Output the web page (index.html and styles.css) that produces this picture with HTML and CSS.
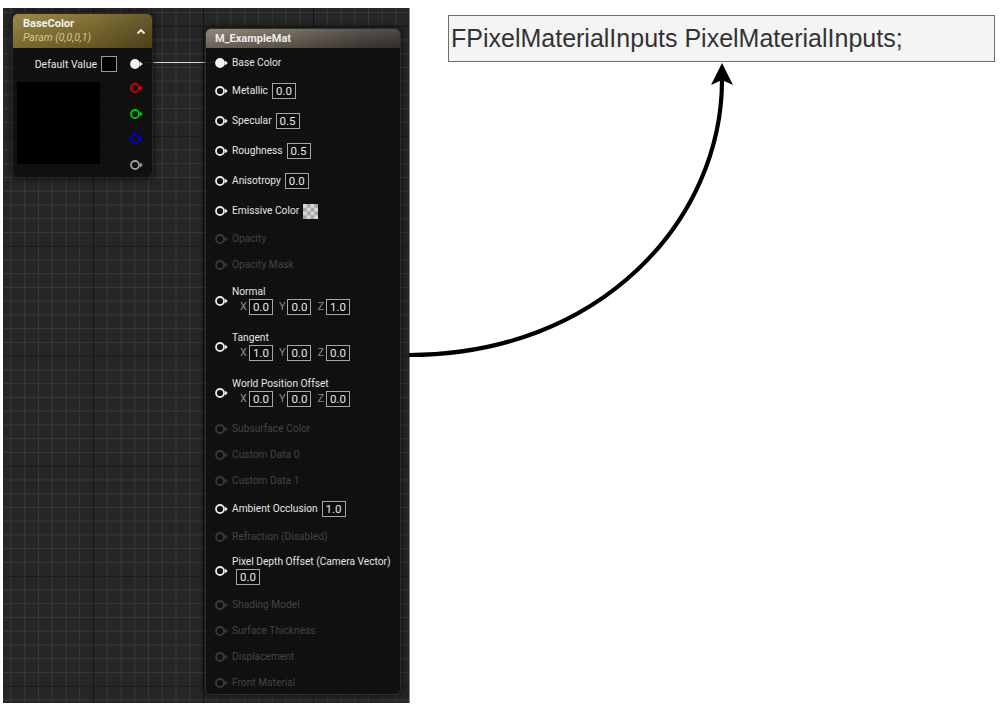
FILE: index.html
```html
<!DOCTYPE html>
<html>
<head>
<meta charset="utf-8">
<link rel="stylesheet" href="styles.css">
</head>
<body>
<div class="page">
  <div class="canvas">
    <div class="wire"></div>

    <div class="node param">
      <div class="param-head">
        <div class="param-titles">
          <div class="param-title">BaseColor</div>
          <div class="param-sub">Param (0,0,0,1)</div>
        </div>
        <svg class="caret" width="10" height="7" viewBox="0 0 10 7"><polyline points="1.5,5.5 5,2 8.5,5.5" fill="none" stroke="#f0f0f0" stroke-width="1.8"/></svg>
      </div>
      <div class="param-body">
        <div class="default-row">
          <span class="default-label">Default Value</span>
          <span class="swatch-black"></span>
          <svg class="pin" width="13" height="10" viewBox="0 0 13 10"><circle cx="5" cy="5" r="4" fill="#f2f2f2" stroke="#f2f2f2" stroke-width="1.8"/><polygon points="10,2.6 12.8,5 10,7.4" fill="#f2f2f2"/></svg>
        </div>
        <div class="preview-row">
          <div class="preview"></div>
          <div class="pin-col">
            <svg class="pin" width="13" height="10" viewBox="0 0 13 10"><circle cx="5" cy="5" r="4" fill="none" stroke="#d40000" stroke-width="1.8"/><polygon points="10,2.6 12.8,5 10,7.4" fill="#d40000"/></svg>
            <svg class="pin" width="13" height="10" viewBox="0 0 13 10"><circle cx="5" cy="5" r="4" fill="none" stroke="#00c800" stroke-width="1.8"/><polygon points="10,2.6 12.8,5 10,7.4" fill="#00c800"/></svg>
            <svg class="pin" width="13" height="10" viewBox="0 0 13 10"><circle cx="5" cy="5" r="4" fill="none" stroke="#0000d8" stroke-width="1.8"/><polygon points="10,2.6 12.8,5 10,7.4" fill="#0000d8"/></svg>
            <svg class="pin" width="13" height="10" viewBox="0 0 13 10"><circle cx="5" cy="5" r="4" fill="none" stroke="#a0a0a0" stroke-width="1.8"/><polygon points="10,2.6 12.8,5 10,7.4" fill="#a0a0a0"/></svg>
          </div>
        </div>
      </div>
    </div>

    <div class="node mat">
      <div class="mat-head">M_ExampleMat</div>
      <div class="mat-body">
        <div class="row">
          <svg class="pin" width="13" height="10" viewBox="0 0 13 10"><circle cx="5" cy="5" r="4" fill="#f2f2f2" stroke="#f2f2f2" stroke-width="1.8"/><polygon points="10,2.6 12.8,5 10,7.4" fill="#f2f2f2"/></svg>
          <span class="label">Base Color</span>
        </div>
        <div class="row r30">
          <svg class="pin" width="13" height="10" viewBox="0 0 13 10"><circle cx="5" cy="5" r="4" fill="none" stroke="#e8e8e8" stroke-width="1.8"/><polygon points="10,2.6 12.8,5 10,7.4" fill="#e8e8e8"/></svg>
          <span class="label">Metallic</span><span class="val">0.0</span>
        </div>
        <div class="row r30">
          <svg class="pin" width="13" height="10" viewBox="0 0 13 10"><circle cx="5" cy="5" r="4" fill="none" stroke="#e8e8e8" stroke-width="1.8"/><polygon points="10,2.6 12.8,5 10,7.4" fill="#e8e8e8"/></svg>
          <span class="label">Specular</span><span class="val">0.5</span>
        </div>
        <div class="row r30">
          <svg class="pin" width="13" height="10" viewBox="0 0 13 10"><circle cx="5" cy="5" r="4" fill="none" stroke="#e8e8e8" stroke-width="1.8"/><polygon points="10,2.6 12.8,5 10,7.4" fill="#e8e8e8"/></svg>
          <span class="label">Roughness</span><span class="val">0.5</span>
        </div>
        <div class="row r30">
          <svg class="pin" width="13" height="10" viewBox="0 0 13 10"><circle cx="5" cy="5" r="4" fill="none" stroke="#e8e8e8" stroke-width="1.8"/><polygon points="10,2.6 12.8,5 10,7.4" fill="#e8e8e8"/></svg>
          <span class="label">Anisotropy</span><span class="val">0.0</span>
        </div>
        <div class="row r30">
          <svg class="pin" width="13" height="10" viewBox="0 0 13 10"><circle cx="5" cy="5" r="4" fill="none" stroke="#e8e8e8" stroke-width="1.8"/><polygon points="10,2.6 12.8,5 10,7.4" fill="#e8e8e8"/></svg>
          <span class="label">Emissive Color</span><span class="checker"></span>
        </div>
        <div class="row off">
          <svg class="pin" width="13" height="10" viewBox="0 0 13 10"><circle cx="5" cy="5" r="4" fill="none" stroke="#3a3a3a" stroke-width="1.8"/><polygon points="10,2.6 12.8,5 10,7.4" fill="#3a3a3a"/></svg>
          <span class="label">Opacity</span>
        </div>
        <div class="row off">
          <svg class="pin" width="13" height="10" viewBox="0 0 13 10"><circle cx="5" cy="5" r="4" fill="none" stroke="#3a3a3a" stroke-width="1.8"/><polygon points="10,2.6 12.8,5 10,7.4" fill="#3a3a3a"/></svg>
          <span class="label">Opacity Mask</span>
        </div>
        <div class="row r46">
          <svg class="pin" width="13" height="10" viewBox="0 0 13 10"><circle cx="5" cy="5" r="4" fill="none" stroke="#e8e8e8" stroke-width="1.8"/><polygon points="10,2.6 12.8,5 10,7.4" fill="#e8e8e8"/></svg>
          <div class="stack">
            <span class="label">Normal</span>
            <div class="xyz"><span class="axis">X</span><span class="val">0.0</span><span class="axis">Y</span><span class="val">0.0</span><span class="axis">Z</span><span class="val">1.0</span></div>
          </div>
        </div>
        <div class="row r46">
          <svg class="pin" width="13" height="10" viewBox="0 0 13 10"><circle cx="5" cy="5" r="4" fill="none" stroke="#e8e8e8" stroke-width="1.8"/><polygon points="10,2.6 12.8,5 10,7.4" fill="#e8e8e8"/></svg>
          <div class="stack">
            <span class="label">Tangent</span>
            <div class="xyz"><span class="axis">X</span><span class="val">1.0</span><span class="axis">Y</span><span class="val">0.0</span><span class="axis">Z</span><span class="val">0.0</span></div>
          </div>
        </div>
        <div class="row r46">
          <svg class="pin" width="13" height="10" viewBox="0 0 13 10"><circle cx="5" cy="5" r="4" fill="none" stroke="#e8e8e8" stroke-width="1.8"/><polygon points="10,2.6 12.8,5 10,7.4" fill="#e8e8e8"/></svg>
          <div class="stack">
            <span class="label">World Position Offset</span>
            <div class="xyz"><span class="axis">X</span><span class="val">0.0</span><span class="axis">Y</span><span class="val">0.0</span><span class="axis">Z</span><span class="val">0.0</span></div>
          </div>
        </div>
        <div class="row off">
          <svg class="pin" width="13" height="10" viewBox="0 0 13 10"><circle cx="5" cy="5" r="4" fill="none" stroke="#3a3a3a" stroke-width="1.8"/><polygon points="10,2.6 12.8,5 10,7.4" fill="#3a3a3a"/></svg>
          <span class="label">Subsurface Color</span>
        </div>
        <div class="row off">
          <svg class="pin" width="13" height="10" viewBox="0 0 13 10"><circle cx="5" cy="5" r="4" fill="none" stroke="#3a3a3a" stroke-width="1.8"/><polygon points="10,2.6 12.8,5 10,7.4" fill="#3a3a3a"/></svg>
          <span class="label">Custom Data 0</span>
        </div>
        <div class="row off">
          <svg class="pin" width="13" height="10" viewBox="0 0 13 10"><circle cx="5" cy="5" r="4" fill="none" stroke="#3a3a3a" stroke-width="1.8"/><polygon points="10,2.6 12.8,5 10,7.4" fill="#3a3a3a"/></svg>
          <span class="label">Custom Data 1</span>
        </div>
        <div class="row r30">
          <svg class="pin" width="13" height="10" viewBox="0 0 13 10"><circle cx="5" cy="5" r="4" fill="none" stroke="#e8e8e8" stroke-width="1.8"/><polygon points="10,2.6 12.8,5 10,7.4" fill="#e8e8e8"/></svg>
          <span class="label">Ambient Occlusion</span><span class="val">1.0</span>
        </div>
        <div class="row off">
          <svg class="pin" width="13" height="10" viewBox="0 0 13 10"><circle cx="5" cy="5" r="4" fill="none" stroke="#3a3a3a" stroke-width="1.8"/><polygon points="10,2.6 12.8,5 10,7.4" fill="#3a3a3a"/></svg>
          <span class="label">Refraction (Disabled)</span>
        </div>
        <div class="row r42">
          <svg class="pin" width="13" height="10" viewBox="0 0 13 10"><circle cx="5" cy="5" r="4" fill="none" stroke="#e8e8e8" stroke-width="1.8"/><polygon points="10,2.6 12.8,5 10,7.4" fill="#e8e8e8"/></svg>
          <div class="stack">
            <span class="label">Pixel Depth Offset (Camera Vector)</span>
            <div class="single"><span class="val">0.0</span></div>
          </div>
        </div>
        <div class="row off">
          <svg class="pin" width="13" height="10" viewBox="0 0 13 10"><circle cx="5" cy="5" r="4" fill="none" stroke="#3a3a3a" stroke-width="1.8"/><polygon points="10,2.6 12.8,5 10,7.4" fill="#3a3a3a"/></svg>
          <span class="label">Shading Model</span>
        </div>
        <div class="row off">
          <svg class="pin" width="13" height="10" viewBox="0 0 13 10"><circle cx="5" cy="5" r="4" fill="none" stroke="#3a3a3a" stroke-width="1.8"/><polygon points="10,2.6 12.8,5 10,7.4" fill="#3a3a3a"/></svg>
          <span class="label">Surface Thickness</span>
        </div>
        <div class="row off">
          <svg class="pin" width="13" height="10" viewBox="0 0 13 10"><circle cx="5" cy="5" r="4" fill="none" stroke="#3a3a3a" stroke-width="1.8"/><polygon points="10,2.6 12.8,5 10,7.4" fill="#3a3a3a"/></svg>
          <span class="label">Displacement</span>
        </div>
        <div class="row off">
          <svg class="pin" width="13" height="10" viewBox="0 0 13 10"><circle cx="5" cy="5" r="4" fill="none" stroke="#3a3a3a" stroke-width="1.8"/><polygon points="10,2.6 12.8,5 10,7.4" fill="#3a3a3a"/></svg>
          <span class="label">Front Material</span>
        </div>
      </div>
    </div>
  </div>

  <div class="note">FPixelMaterialInputs PixelMaterialInputs;</div>

  <svg class="arrow" width="1000" height="711" viewBox="0 0 1000 711">
    <path d="M409,355 C600,355 722,220 722,80" fill="none" stroke="#000" stroke-width="4.2"/>
    <polygon points="722,63 733,85 722,80 711,85" fill="#000"/>
  </svg>
</div>
</body>
</html>
```

FILE: styles.css
```css
* { box-sizing: border-box; }

html, body {
  margin: 0;
  padding: 0;
  background: #ffffff;
}

.page {
  position: relative;
  width: 1000px;
  height: 711px;
  display: flex;
  align-items: flex-start;
  padding: 8px 0 0 3px;
  font-family: Roboto, "Liberation Sans", sans-serif;
}

.canvas {
  position: relative;
  width: 407px;
  height: 695px;
  flex: none;
  overflow: hidden;
  border-right: 1px solid #8c8c8c;
  background-color: #262626;
  background-image:
    linear-gradient(to right, #141414 1px, transparent 1px),
    linear-gradient(to bottom, #141414 1px, transparent 1px),
    linear-gradient(to right, #383838 1px, transparent 1px),
    linear-gradient(to bottom, #383838 1px, transparent 1px);
  background-size: 110px 110px, 110px 110px, 13.75px 13.75px, 13.75px 13.75px;
  background-position: 90px 0, 0 17.7px, 7.5px 0, 0 3.95px;
}

.wire {
  position: absolute;
  left: 141px;
  top: 53.5px;
  width: 72px;
  height: 1px;
  background: #d8d8d8;
}

.node {
  position: absolute;
  border-radius: 6px;
  background: rgba(14, 14, 14, 0.9);
  border: 1px solid #262626;
  box-shadow: 0 0 5px 2px rgba(0, 0, 0, 0.45);
  overflow: hidden;
}

/* BaseColor parameter node */
.param {
  left: 9px;
  top: 5px;
  width: 141px;
  height: 165px;
}

.param-head {
  height: 34px;
  display: flex;
  align-items: center;
  justify-content: space-between;
  padding: 0 6px 0 10px;
  background:
    linear-gradient(to bottom, rgba(255, 255, 255, 0.07), rgba(0, 0, 0, 0.18)),
    linear-gradient(to right, #93803a, #7a6828 60%, #5b4e1e);
}

.param-titles {
  display: flex;
  flex-direction: column;
}

.param-title {
  font-size: 11px;
  font-weight: bold;
  color: #f0f0f0;
  line-height: 14px;
}

.param-sub {
  font-size: 10.5px;
  font-style: italic;
  color: #d6c790;
  line-height: 14px;
}

.caret {
  display: block;
}

.param-body {
  padding: 8px 9px 0 4px;
  display: flex;
  flex-direction: column;
  gap: 10px;
}

.default-row {
  display: flex;
  align-items: center;
  justify-content: flex-end;
  height: 16px;
}

.default-label {
  font-size: 10.5px;
  color: #e6e6e6;
  margin-right: 4px;
}

.swatch-black {
  width: 16px;
  height: 16px;
  background: #000;
  border: 1px solid #9a9a9a;
  margin-right: 13px;
}

.pin {
  display: block;
  flex: none;
}

.preview-row {
  display: flex;
  justify-content: space-between;
  align-items: flex-start;
}

.preview {
  width: 83px;
  height: 82px;
  background: #000;
}

.pin-col {
  display: flex;
  flex-direction: column;
  gap: 15.5px;
  padding-top: 1px;
}

/* Material node */
.mat {
  left: 202px;
  top: 20px;
  width: 196px;
  height: 667px;
  border-color: #2e2e2e;
}

.mat-head {
  height: 19px;
  padding-left: 9px;
  display: flex;
  align-items: center;
  font-size: 11px;
  font-weight: bold;
  color: #ececec;
  background:
    linear-gradient(to bottom, rgba(255, 255, 255, 0.1), rgba(0, 0, 0, 0.2)),
    linear-gradient(to right, #85796a, #6a6054 45%, #45413b 80%, #3a3734);
}

.mat-body {
  padding: 2px 0 0 9px;
  display: flex;
  flex-direction: column;
}

.row {
  height: 26px;
  display: flex;
  align-items: center;
}

.row.r30 { height: 30px; }
.row.r42 { height: 42px; }
.row.r46 { height: 46px; }

.row .pin {
  margin-right: 4px;
}

.label {
  font-size: 10.2px;
  color: #e4e4e4;
  line-height: 14px;
  white-space: nowrap;
}

.row.off .label {
  color: #444444;
}

.row > .label + .val,
.row > .label + .checker {
  margin-left: 4px;
}

.val {
  display: inline-flex;
  align-items: center;
  justify-content: center;
  height: 16px;
  padding: 0 3px;
  border: 1px solid #a6a6a6;
  font-size: 11.5px;
  color: #e8e8e8;
  background: #0c0c0c;
}

.checker {
  width: 15px;
  height: 15px;
  background-color: #d8d8d8;
  background-image:
    linear-gradient(45deg, #a2a2a2 25%, transparent 25%, transparent 75%, #a2a2a2 75%),
    linear-gradient(45deg, #a2a2a2 25%, transparent 25%, transparent 75%, #a2a2a2 75%);
  background-size: 7.5px 7.5px;
  background-position: 0 0, 3.75px 3.75px;
}

.stack {
  display: flex;
  flex-direction: column;
  padding-bottom: 3px;
}

.xyz {
  display: flex;
  align-items: center;
  padding-left: 8px;
  height: 16px;
}

.axis {
  font-size: 11px;
  color: #8a8a8a;
  margin: 0 2px 0 6px;
}

.axis:first-child {
  margin-left: 0;
}

.single {
  display: flex;
  padding-left: 4px;
  height: 16px;
}

/* Annotation */
.note {
  margin: 7px 0 0 38px;
  width: 547px;
  height: 47px;
  flex: none;
  display: flex;
  align-items: center;
  padding-left: 2px;
  background: #f4f4f4;
  border: 1px solid #6e6e6e;
  font-family: "Liberation Sans", Arial, sans-serif;
  font-size: 25px;
  color: #333333;
}

.arrow {
  position: absolute;
  left: 0;
  top: 0;
  pointer-events: none;
}
```
